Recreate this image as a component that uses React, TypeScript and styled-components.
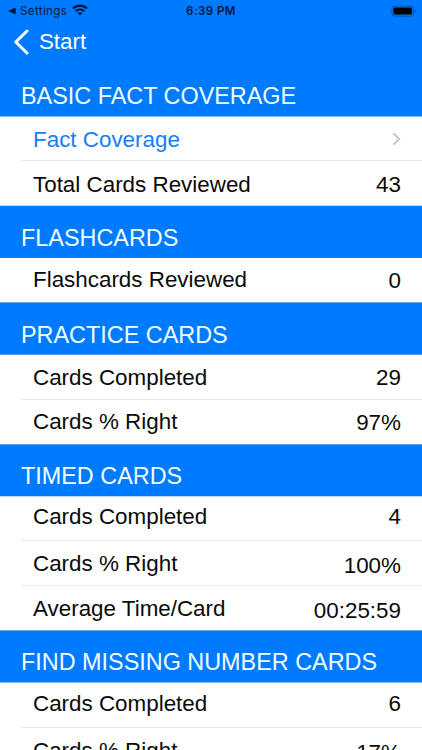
import React from "react";
import styled, { createGlobalStyle } from "styled-components";

const BLUE = "#007aff";

const GlobalStyle = createGlobalStyle`
  html, body { margin: 0; padding: 0; background: #fff; }
  body { overflow: hidden; }
`;

const Screen = styled.main`
  width: 422px;
  height: 750px;
  overflow: hidden;
  background: #fff;
  color: #0a0a0a;
  font-family: "Liberation Sans", Arial, sans-serif;
  font-size: 22.4px;
  line-height: 26px;
`;

const StatusBar = styled.header`
  display: grid;
  grid-template-columns: 1fr auto 1fr;
  align-items: center;
  box-sizing: border-box;
  height: 22px;
  padding: 0 5px 0 8px;
  background: ${BLUE};
  color: #00173a;
  font-family: Inter, "Liberation Sans", sans-serif;
  font-size: 11.5px;
  line-height: 22px;
`;

const BackToApp = styled.div`
  display: flex;
  align-items: center;
  letter-spacing: 0.4px;
`;

const BackTriangle = styled.svg`
  width: 8px;
  height: 8px;
  margin-right: 4px;
`;

const WifiIcon = styled.svg`
  width: 16px;
  height: 12px;
  margin: 0 0 2px 5px;
`;

const Clock = styled.time`
  font-weight: 600;
  letter-spacing: 0.45px;
  margin-right: 3px;
`;

const BatteryIcon = styled.svg`
  justify-self: end;
  width: 26px;
  height: 12px;
  margin-top: -1px;
`;

const NavBar = styled.nav`
  display: flex;
  align-items: center;
  height: 40px;
  padding-left: 13px;
  background: ${BLUE};
  color: #fff;
`;

const BackButton = styled.button`
  display: flex;
  align-items: center;
  padding: 0;
  border: 0;
  background: none;
  color: inherit;
  font: inherit;
  font-size: 22.3px;
`;

const BackChevron = styled.svg`
  width: 17px;
  height: 26px;
  margin-right: 9px;
`;

const SectionTitle = styled.h2<{ $height: number; $pad: number; $top?: string; $bottom?: string }>`
  box-sizing: border-box;
  height: ${(p) => p.$height}px;
  margin: 0;
  padding: ${(p) => p.$pad}px 0 0 21px;
  background: ${BLUE};
  box-shadow: inset 0 1px 0 ${(p) => p.$top ?? BLUE}, inset 0 -1px 0 ${(p) => p.$bottom ?? BLUE};
  color: #f2ffff;
  font-size: 23.4px;
  font-weight: 400;
  white-space: nowrap;
`;

const Rows = styled.div`
  padding-left: 21px;
`;

const Row = styled.div<{ $height: number; $line?: boolean }>`
  display: flex;
  justify-content: space-between;
  box-sizing: border-box;
  height: ${(p) => p.$height}px;
  padding: 0 21px 0 12px;
  border-bottom: ${(p) => (p.$line ? "1px solid #e9e9eb" : "0")};
`;

const Label = styled.span<{ $pad: number; $link?: boolean }>`
  padding-top: ${(p) => p.$pad}px;
  color: ${(p) => (p.$link ? "#147efb" : "inherit")};
  white-space: nowrap;
`;

const Value = styled.span<{ $pad: number }>`
  padding-top: ${(p) => p.$pad}px;
`;

const Disclosure = styled.svg`
  width: 9px;
  height: 14px;
  margin-top: 15px;
`;

interface Stat {
  label: string;
  value?: string;
  height: number;
  labelPad: number;
  valuePad?: number;
}

interface Section {
  title: string;
  height: number;
  pad: number;
  top?: string;
  bottom?: string;
  rows: Stat[];
}

const sections: Section[] = [
  {
    title: "BASIC FACT COVERAGE",
    height: 55,
    pad: 21,
    bottom: "#80bcff",
    rows: [
      { label: "Fact Coverage", height: 44, labelPad: 10 },
      { label: "Total Cards Reviewed", value: "43", height: 44, labelPad: 11, valuePad: 11 },
    ],
  },
  {
    title: "FLASHCARDS",
    height: 53,
    pad: 20,
    top: "#b8dbff",
    rows: [{ label: "Flashcards Reviewed", value: "0", height: 44, labelPad: 9, valuePad: 10 }],
  },
  {
    title: "PRACTICE CARDS",
    height: 53,
    pad: 20,
    top: "#66adff",
    bottom: "#5599e8",
    rows: [
      { label: "Cards Completed", value: "29", height: 45, labelPad: 10, valuePad: 10 },
      { label: "Cards % Right", value: "97%", height: 44, labelPad: 9, valuePad: 10 },
    ],
  },
  {
    title: "TIMED CARDS",
    height: 53,
    pad: 19,
    top: "#5599e8",
    bottom: "#b8dbff",
    rows: [
      { label: "Cards Completed", value: "4", height: 44, labelPad: 7, valuePad: 7 },
      { label: "Cards % Right", value: "100%", height: 45, labelPad: 10, valuePad: 12 },
      { label: "Average Time/Card", value: "00:25:59", height: 44, labelPad: 10, valuePad: 12 },
    ],
  },
  {
    title: "FIND MISSING NUMBER CARDS",
    height: 53,
    pad: 19,
    top: "#66adff",
    bottom: "#80bcff",
    rows: [
      { label: "Cards Completed", value: "6", height: 45, labelPad: 8, valuePad: 8 },
      { label: "Cards % Right", value: "17%", height: 45, labelPad: 10, valuePad: 12 },
    ],
  },
];

export default function App() {
  return (
    <>
      <GlobalStyle />
      <Screen>
        <StatusBar>
          <BackToApp>
            <BackTriangle viewBox="0 0 8 8">
              <path d="M0 4 7.6 0.4V7.6Z" fill="currentColor" />
            </BackTriangle>
            Settings
            <WifiIcon viewBox="0 0 16 12" fill="none" stroke="currentColor">
              <path d="M1 4.5a10 10 0 0 1 14 0" strokeWidth="2.3" />
              <path d="M3.7 7.2a6.2 6.2 0 0 1 8.6 0" strokeWidth="2" />
              <path d="M8 11.6 5.7 9.3a3.3 3.3 0 0 1 4.6 0Z" fill="currentColor" stroke="none" />
            </WifiIcon>
          </BackToApp>
          <Clock>6:39 PM</Clock>
          <BatteryIcon viewBox="0 0 26 12">
            <rect x="0.9" y="0.9" width="21.6" height="10.2" rx="2.8" fill="none" stroke="#0050a8" />
            <rect x="2.4" y="2.4" width="18.6" height="7.2" rx="1.3" fill="#000" />
            <path d="M23.8 4.2c1.7.5 1.7 3.1 0 3.6Z" fill="#0050a8" />
          </BatteryIcon>
        </StatusBar>
        <NavBar>
          <BackButton>
            <BackChevron viewBox="0 0 17 26" fill="none" stroke="#fff" strokeWidth="3">
              <path d="M14 2 2.8 13 14 24" strokeLinecap="round" strokeLinejoin="round" />
            </BackChevron>
            Start
          </BackButton>
        </NavBar>
        {sections.map((s) => (
          <section key={s.title}>
            <SectionTitle $height={s.height} $pad={s.pad} $top={s.top} $bottom={s.bottom}>
              {s.title}
            </SectionTitle>
            <Rows>
              {s.rows.map((r, i) => (
                <Row key={r.label} $height={r.height} $line={i < s.rows.length - 1}>
                  <Label $pad={r.labelPad} $link={!r.value}>
                    {r.label}
                  </Label>
                  {r.value ? (
                    <Value $pad={r.valuePad ?? 0}>{r.value}</Value>
                  ) : (
                    <Disclosure viewBox="0 0 9 14" fill="none" stroke="#c4c4c7" strokeWidth="1.9">
                      <path d="M1.5 1.5 7.3 7 1.5 12.5" />
                    </Disclosure>
                  )}
                </Row>
              ))}
            </Rows>
          </section>
        ))}
      </Screen>
    </>
  );
}
